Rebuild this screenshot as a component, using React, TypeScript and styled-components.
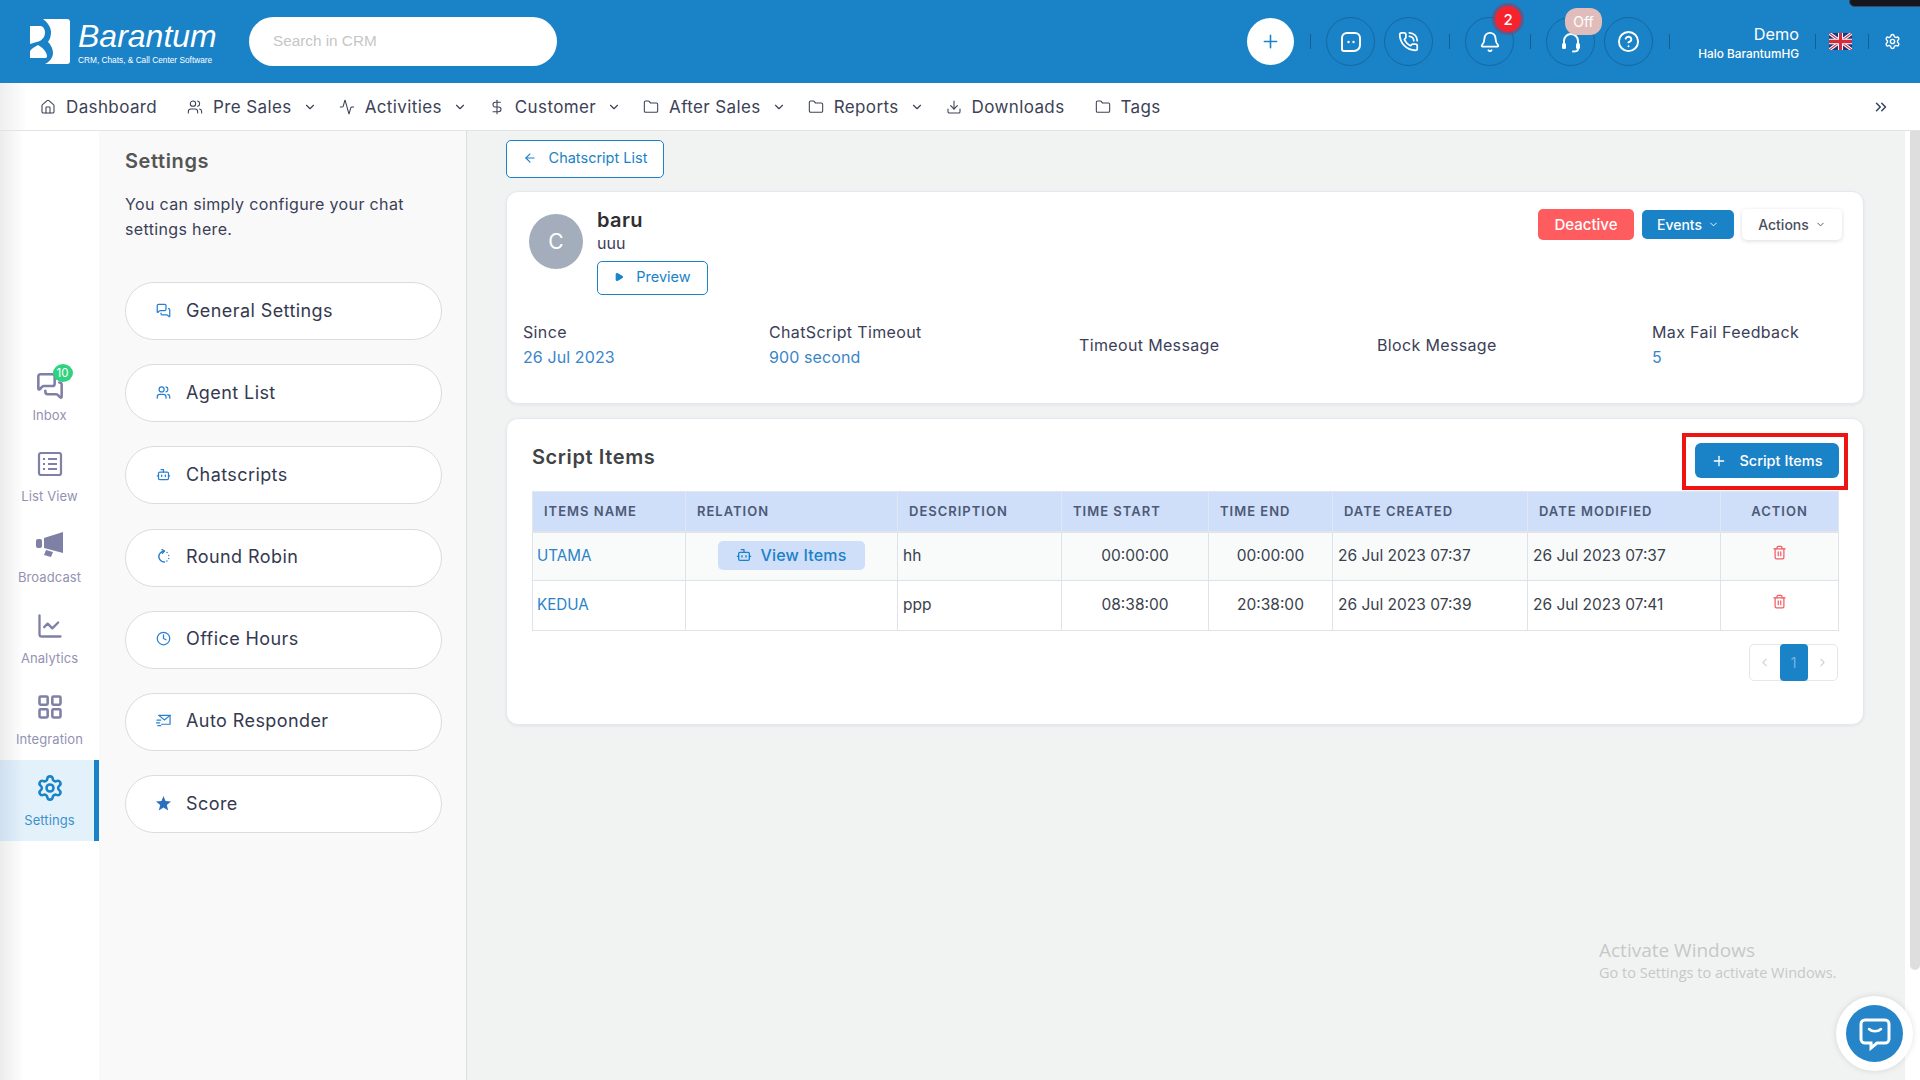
import React from "react";
import styled, { createGlobalStyle } from "styled-components";
import {
  House, Users, Activity, DollarSign, Folder, Download, ChevronDown, ChevronsRight, ChevronLeft, ChevronRight,
  Plus, PhoneCall, Bell, CircleHelp, Settings, MessagesSquare, ChartLine, LayoutGrid, Bot,
  Clock, ArrowLeft, Play, Trash2,
} from "lucide-react";

const BLUE = "#1a82c7";
const FONT = `Inter, "Noto Sans", "Liberation Sans", sans-serif`;

const Global = createGlobalStyle`
  html, body { margin: 0; padding: 0; background: #fff; }
  * { box-sizing: border-box; }
  body { font-family: ${FONT}; overflow: hidden; }
`;

const Shell = styled.div`
  position: relative; width: 1920px; height: 1080px; overflow: hidden;
  display: flex; flex-direction: column; background: #fff;
`;
const TopBar = styled.header`
  height: 83px; flex: none; display: flex; align-items: center; padding: 0 19px 0 30px; background: ${BLUE}; color: #fff;
`;
const Logo = styled.div`
  display: flex; align-items: center; gap: 8px; width: 185px;
  svg { flex: none; }
`;
const LogoText = styled.div`display: flex; flex-direction: column; font-family: "Liberation Sans", sans-serif;`;
const LogoName = styled.span`font-size: 32px; font-style: italic; line-height: 32px; margin-top: 1px;`;
const LogoSub = styled.span`font-size: 8.3px; line-height: 10px; margin-top: 3px; white-space: nowrap;`;
const Search = styled.input`
  width: 308px; height: 49px; margin-left: 34px; border: 0; border-radius: 25px; background: #fff; padding: 0 24px 2px; outline: none;
  font: 15.3px "Liberation Sans", sans-serif;
  &::placeholder { color: #c6c6c6; }
`;
const Spacer = styled.div`flex: 1;`;
const RoundAdd = styled.button`
  width: 47px; height: 47px; border: 0; border-radius: 50%; background: #fff; color: ${BLUE};
  display: flex; align-items: center; justify-content: center; padding: 0;
`;
const Sep = styled.span`width: 1px; height: 15px; background: #145f94; margin: 0 15px 0 16px; flex: none;`;
const RoundIcon = styled.div<{ $next?: boolean }>`
  position: relative; width: 49px; height: 49px; border-radius: 50%; border: 1px solid #16689f;
  display: flex; align-items: center; justify-content: center; color: #fff; flex: none;
  margin-left: ${(p) => (p.$next ? "9px" : "0")};
`;
const CountBadge = styled.span`
  position: absolute; left: 29px; top: -12px; width: 26px; height: 26px; border-radius: 50%; background: #f6222c;
  box-shadow: 0 0 0 3px rgba(150, 60, 90, .55); color: #fff; font-size: 15px; font-weight: 500;
  display: flex; align-items: center; justify-content: center;
`;
const OffBadge = styled.span`
  position: absolute; left: 18px; top: -10px; width: 37px; height: 27px; border-radius: 12px; background: #e0bdbb;
  color: #fff; font-size: 14px; display: flex; align-items: center; justify-content: center;
`;
const UserBox = styled.div`
  width: 115px; margin-left: -1px; padding-top: 3px; text-align: right; display: flex; flex-direction: column; align-items: flex-end; gap: 3px;
`;
const UserName = styled.span`font-size: 16.3px; line-height: 20px;`;
const UserHello = styled.span`font-size: 11.8px; line-height: 15px; font-weight: 500; white-space: nowrap;`;
const Flag = styled.svg`width: 23px; height: 17px; display: block; flex: none; margin-left: -2px;`;
const GearWrap = styled.div`display: flex; color: #fff;`;
const TopNotch = styled.div`
  position: absolute; top: -4px; right: -10px; width: 81px; height: 11px; background: #16171c; border-radius: 10px; border: 1px solid #3a4a60;
`;

const NavBar = styled.nav`
  height: 48px; flex: none; display: flex; align-items: center; padding: 0 30px 0 40px;
  border-bottom: 1px solid #e3e3e3;
  background: linear-gradient(to right, #efefef, #fff 28px);
  color: #3c4257; font-size: 17px; letter-spacing: .38px;
`;
const NavItem = styled.div<{ $more?: boolean }>`
  display: flex; align-items: center; margin-right: ${(p) => (p.$more ? 22 : 30)}px; white-space: nowrap;
  svg:first-child { margin-right: 10px; }
  svg:last-child:not(:first-child) { margin-left: 11px; }
`;
const NavEnd = styled.div`margin-left: auto; display: flex; color: #33425e;`;

const Body = styled.div`flex: 1; display: flex; min-height: 0;`;
const Rail = styled.aside`
  width: 99px; flex: none; padding-top: 224px;
  background: linear-gradient(to right, #ececec, #fff 24px);
`;
const RailItem = styled.div<{ $active?: boolean }>`
  height: 81px; display: flex; flex-direction: column; align-items: center; padding-top: 14px;
  color: ${(p) => (p.$active ? BLUE : "#7f80a6")};
  background: ${(p) => (p.$active ? "linear-gradient(to right, #cfdfee, #e3f1fb 24px)" : "transparent")};
  box-shadow: ${(p) => (p.$active ? `inset -5px 0 0 ${BLUE}` : "none")};
`;
const RailIcon = styled.div<{ $drop?: number }>`
  height: 28px; margin-top: ${(p) => p.$drop ?? 0}px; margin-bottom: ${(p) => -(p.$drop ?? 0)}px;
  display: flex; align-items: center; justify-content: center; position: relative;
`;
const RailLabel = styled.span`margin-top: 10px; font-size: 13px; letter-spacing: .1px; line-height: 16px; opacity: .85;`;
const InboxBadge = styled.span`
  position: absolute; left: 17px; top: -8px; width: 20px; height: 18px; border-radius: 50%; background: #2fd37f; color: #fff;
  font-size: 11.5px; letter-spacing: 0; display: flex; align-items: center; justify-content: center;
`;
const Panel = styled.section`
  width: 368px; flex: none; padding: 15px 24px 0 26px; background: #f9f9f9; border-right: 1px solid #ddd;
`;
const PanelTitle = styled.h2`margin: 0; font-size: 20px; line-height: 30px; font-weight: 600; color: #555; letter-spacing: .6px;`;
const PanelDesc = styled.p`margin: 16px 0 40px; width: 300px; font-size: 16px; letter-spacing: .35px; line-height: 25px; color: #3b4058;`;
const PillList = styled.div`display: flex; flex-direction: column; gap: 24.2px;`;
const Pill = styled.div`
  width: 317px; height: 58px; border: 1px solid #dcdcdc; border-radius: 29px; background: #fff; padding-bottom: 2px;
  display: flex; align-items: center; padding-left: 30px; gap: 15px; color: #34394f; font-size: 18px; letter-spacing: .42px;
  svg { color: #2a7fd0; flex: none; }
`;
const Main = styled.main`flex: 1; padding: 9px 41px 0 39px; background: #f1f3f3; min-width: 0;`;
const Gutter = styled.div`width: 15px; flex: none; background: #fff; padding-left: 5px;`;
const Thumb = styled.div`width: 10px; height: 839px; background: #dedede; border-radius: 0 0 5px 5px;`;
const OutlineBtn = styled.button<{ $w: number; $h: number }>`
  width: ${(p) => p.$w}px; height: ${(p) => p.$h}px; border: 1px solid ${BLUE}; border-radius: 5px; background: #fff; color: ${BLUE};
  font: 14.5px ${FONT}; display: flex; align-items: center; justify-content: center; gap: 12px; padding: 0 0 3px;
`;
const Card = styled.div<{ $h: number; $mt: number }>`
  height: ${(p) => p.$h}px; margin-top: ${(p) => p.$mt}px; background: #fff; border: 1px solid #e3e9ef; border-radius: 12px;
  box-shadow: 0 1px 3px rgba(120, 140, 170, .15);
`;
const HeadRow = styled.div`display: flex; justify-content: space-between; padding: 15px 21px 0 22px;`;
const Identity = styled.div`display: flex; gap: 14px;`;
const Avatar = styled.div`
  width: 54px; height: 55px; margin-top: 7px; border-radius: 50%; background: #a3adbb; color: #fff; font-size: 21px;
  display: flex; align-items: center; justify-content: center;
`;
const Info = styled.div`display: flex; flex-direction: column; align-items: flex-start;`;
const Name = styled.div`font-size: 20px; line-height: 26px; font-weight: 600; color: #2e2e33; letter-spacing: .4px;`;
const Sub = styled.div`font-size: 16px; line-height: 20px; color: #3b4058; margin-bottom: 8px;`;
const BtnRow = styled.div`display: flex; gap: 8px; align-items: center; margin-top: 2px; height: 31px;`;
const ActionBtn = styled.button<{ $w: number; $h: number; $bg: string; $fg: string; $size: number }>`
  width: ${(p) => p.$w}px; height: ${(p) => p.$h}px; background: ${(p) => p.$bg}; color: ${(p) => p.$fg}; border: 0; border-radius: 5px;
  font: 500 ${(p) => p.$size}px ${FONT}; display: flex; align-items: center; justify-content: center; gap: 6px; padding: 0;
  box-shadow: ${(p) => (p.$bg === "#fff" ? "0 1px 4px rgba(0,0,0,.14)" : "none")};
`;
const Stats = styled.div`
  display: grid; grid-template-columns: 246px 310px 298px 275px auto; align-items: center; margin: 25px 0 0 16px;
`;
const StatLabel = styled.div`font-size: 16px; letter-spacing: .35px; line-height: 25px; color: #3b4058;`;
const StatValue = styled.div`font-size: 16px; letter-spacing: .1px; line-height: 25px; color: #3a85c9;`;
const ItemsCard = styled.div`padding: 24px 24px 0 25px;`;
const ItemsHead = styled.div`display: flex; justify-content: space-between; align-items: center; height: 35px;`;
const ItemsTitle = styled.h3`margin: 0 0 7px 0; font-size: 20px; font-weight: 600; color: #3f4346; letter-spacing: .6px;`;
const AddWrap = styled.div`position: relative;`;
const AddBtn = styled.button`
  width: 144px; height: 35px; border: 0; border-radius: 6px; background: ${BLUE}; color: #fff; font: 500 14.5px ${FONT};
  display: flex; align-items: center; justify-content: center; gap: 12px; padding: 0;
`;
const RedBox = styled.div`position: absolute; left: -13px; right: -9px; top: -10px; bottom: -12px; border: 4px solid #ee1414; pointer-events: none;`;
const Table = styled.table`
  width: 1306px; margin-top: 13px; border-collapse: collapse; table-layout: fixed;
`;
const Th = styled.th<{ $w: number; $center?: boolean }>`
  width: ${(p) => p.$w}px; height: 40px; padding: 0 0 0 ${(p) => (p.$center ? 0 : 11)}px; background: #cfdef9; border: 1px solid #e2e6f0; border-bottom: 2px solid #e2e4ea;
  font-size: 13px; font-weight: 600; letter-spacing: 1px; color: #4c5a76; text-align: ${(p) => (p.$center ? "center" : "left")};
`;
const Tr = styled.tr<{ $shade?: boolean; $h: number }>`
  height: ${(p) => p.$h}px; background: ${(p) => (p.$shade ? "#f9fbfb" : "#fff")};
`;
const Td = styled.td<{ $center?: boolean; $link?: boolean }>`
  padding: 0 0 2px ${(p) => (p.$center ? 0 : 5)}px; border: 1px solid #e0e2ea; font-size: 15.5px;
  color: ${(p) => (p.$link ? "#2b82c9" : "#3a3f4c")}; text-align: ${(p) => (p.$center ? "center" : "left")};
  white-space: nowrap;
`;
const LinkName = styled.span`margin-left: -1px; font-size: 15.2px;`;
const ViewItems = styled.button`
  width: 147px; height: 29px; margin: 1px 0 0 27px; border: 0; border-radius: 5px; background: #cfdef9; color: ${BLUE};
  font: 500 16px ${FONT}; letter-spacing: .2px; display: flex; align-items: center; justify-content: center; gap: 8px; padding: 0 0 1px;
`;
const TrashBtn = styled.span`display: inline-flex; color: #f25c66; position: relative; top: -1px;`;
const Pager = styled.div`
  display: flex; width: 89px; height: 37px; margin: 13px 1px 0 auto; border: 1px solid #e4e8ee; border-radius: 5px; color: #d0d5dc;
`;
const PageStep = styled.div`flex: 1; display: flex; align-items: center; justify-content: center;`;
const PageCurrent = styled.div`
  width: 28px; background: ${BLUE}; border-radius: 4px; color: #74b4e2; font-size: 14px;
  display: flex; align-items: center; justify-content: center; margin: -1px 0;
`;
const Watermark = styled.div`
  position: absolute; left: 1599px; top: 938px; color: #c6c8c8; font-family: "Open Sans", sans-serif; pointer-events: none;
`;
const WmTitle = styled.div`font-size: 19px; line-height: 25px;`;
const WmSub = styled.div`font-size: 14.5px; line-height: 20px;`;
const ChatFab = styled.div`
  position: absolute; left: 1836px; top: 996px; width: 77px; height: 75px; border-radius: 50%; background: #fff;
  box-shadow: 0 0 6px rgba(0,0,0,.12); display: flex; align-items: center; justify-content: center;
`;
const ChatInner = styled.div`
  width: 57px; height: 57px; border-radius: 50%; background: #2585c8; display: flex; align-items: center; justify-content: center;
`;

const LogoMark = () => (
  <svg width="40" height="45" viewBox="0 0 40 45" fill="#fff">
    <path d="M13 0H37a3 3 0 0 1 3 3V42a3 3 0 0 1-3 3H15c4-2 8-6 8-11 0-5-3-9-5-11 2-3 3-6 3-10 0-5-4-10-8-13Z" />
    <path d="M0 7H11c3 1 4 4 4 7s-2 6-5 8L0 25Z" />
    <path d="M0 39V33c0-3 5-5 8-7 4 2 9 7 9 11 0 2-1 2-3 2Z" />
  </svg>
);
const BotSquare = () => (
  <svg width="22" height="22" viewBox="0 0 22 22" fill="none" stroke="#fff" strokeWidth="2">
    <path d="M7 2h8a5 5 0 0 1 5 5v7a6 6 0 0 1-6 6H4a2 2 0 0 1-2-2V7a5 5 0 0 1 5-5Z" />
    <circle cx="8.5" cy="11" r="1.2" fill="#fff" stroke="none" />
    <circle cx="13.5" cy="11" r="1.2" fill="#fff" stroke="none" />
  </svg>
);
const AgentHeadset = () => (
  <svg width="24" height="24" viewBox="0 0 24 24" fill="none" stroke="#fff" strokeWidth="2" strokeLinecap="round">
    <path d="M5 15v-4a7 7 0 0 1 14 0v4" />
    <rect x="3" y="13" width="4" height="6" rx="1.5" fill="#fff" stroke="none" />
    <rect x="17" y="13" width="4" height="6" rx="1.5" fill="#fff" stroke="none" />
    <path d="M19 19c0 2-2 2.5-5 2.5" />
  </svg>
);
const ListSquare = () => (
  <svg width="26" height="26" viewBox="0 0 26 26" fill="none" stroke="currentColor" strokeWidth="2.2">
    <rect x="2" y="2" width="22" height="22" rx="2" />
    <path d="M6 8h2M11 8h9M6 13h2M11 13h9M6 18h2M11 18h9" />
  </svg>
);
const Horn = () => (
  <svg width="28" height="26" viewBox="0 0 28 26" fill="currentColor">
    <rect x="0" y="7" width="6" height="9" rx="2" />
    <path d="M8 6 27 0v21L8 16Z" />
    <path d="M10 18l7 2-2 5-7-2Z" />
  </svg>
);
const StarIcon = () => (
  <svg width="15" height="15" viewBox="0 0 15 15" fill="#2a6fc0">
    <path d="M7.5 0l2 5 5.5.4-4.2 3.5 1.4 5.6-4.7-3-4.7 3 1.4-5.6L0 5.4 5.5 5Z" />
  </svg>
);
const RobinIcon = () => (
  <svg width="15" height="15" viewBox="0 0 15 15" fill="none" stroke="currentColor" strokeWidth="1.4" strokeLinecap="round">
    <path d="M8 2.2A5.4 5.4 0 1 0 8.5 13" />
    <path d="M6 .4 8.4 2.2 6.4 4.2" />
    <path d="M11 3.4l.1.1M12.8 6.4v.1M12.8 9.4v.1M11 12l-.1.1" />
  </svg>
);
const ResponderIcon = () => (
  <svg width="15" height="15" viewBox="0 0 16 15" fill="none" stroke="currentColor" strokeWidth="1.3" strokeLinecap="round">
    <path d="M3 2h12v9.5H6" />
    <path d="M3 2l6 5 6-5" />
    <path d="M1 7h4M0.5 10h3.5M2 13h3" />
  </svg>
);
const UkFlag = () => (
  <Flag viewBox="0 0 60 40" preserveAspectRatio="none">
    <rect width="60" height="40" fill="#26357a" />
    <path d="M0 0l60 40M60 0L0 40" stroke="#fff" strokeWidth="8" />
    <path d="M0 0l60 40M60 0L0 40" stroke="#d23a4a" strokeWidth="3" />
    <path d="M30 0v40M0 20h60" stroke="#fff" strokeWidth="13" />
    <path d="M30 0v40M0 20h60" stroke="#d32a3c" strokeWidth="8" />
  </Flag>
);
const ChatGlyph = () => (
  <svg width="34" height="34" viewBox="0 0 34 34" fill="none" stroke="#fff">
    <path d="M7 3h20a4 4 0 0 1 4 4v15a4 4 0 0 1-4 4h-8l-6 5v-5H7a4 4 0 0 1-4-4V7a4 4 0 0 1 4-4Z" strokeWidth="3" />
    <path d="M11 12c3 3 9 3 12 0" strokeWidth="2.5" strokeLinecap="round" />
  </svg>
);

const navItems = [
  { icon: House, label: "Dashboard" },
  { icon: Users, label: "Pre Sales", more: true },
  { icon: Activity, label: "Activities", more: true },
  { icon: DollarSign, label: "Customer", more: true },
  { icon: Folder, label: "After Sales", more: true },
  { icon: Folder, label: "Reports", more: true },
  { icon: Download, label: "Downloads" },
  { icon: Folder, label: "Tags" },
];
const pills = [
  { icon: <MessagesSquare size={15} />, label: "General Settings" },
  { icon: <Users size={15} />, label: "Agent List" },
  { icon: <Bot size={15} />, label: "Chatscripts" },
  { icon: <RobinIcon />, label: "Round Robin" },
  { icon: <Clock size={15} />, label: "Office Hours" },
  { icon: <ResponderIcon />, label: "Auto Responder" },
  { icon: <StarIcon />, label: "Score" },
];
const stats = [
  { label: "Since", value: "26 Jul 2023" },
  { label: "ChatScript Timeout", value: "900 second" },
  { label: "Timeout Message" },
  { label: "Block Message" },
  { label: "Max Fail Feedback", value: "5" },
];
const rows = [
  { name: "UTAMA", rel: true, desc: "hh", start: "00:00:00", end: "00:00:00", created: "26 Jul 2023 07:37", modified: "26 Jul 2023 07:37", h: 49, shade: true },
  { name: "KEDUA", rel: false, desc: "ppp", start: "08:38:00", end: "20:38:00", created: "26 Jul 2023 07:39", modified: "26 Jul 2023 07:41", h: 50, shade: false },
];

export default function App() {
  return (
    <Shell>
      <Global />
      <TopBar>
        <Logo>
          <LogoMark />
          <LogoText>
            <LogoName>Barantum</LogoName>
            <LogoSub>CRM, Chats, &amp; Call Center Software</LogoSub>
          </LogoText>
        </Logo>
        <Search placeholder="Search in CRM" />
        <Spacer />
        <RoundAdd><Plus size={21} strokeWidth={1.8} /></RoundAdd>
        <Sep />
        <RoundIcon><BotSquare /></RoundIcon>
        <RoundIcon $next><PhoneCall size={21} /></RoundIcon>
        <Sep />
        <RoundIcon><Bell size={22} /><CountBadge>2</CountBadge></RoundIcon>
        <Sep />
        <RoundIcon><AgentHeadset /><OffBadge>Off</OffBadge></RoundIcon>
        <RoundIcon $next><CircleHelp size={23} /></RoundIcon>
        <Sep />
        <UserBox>
          <UserName>Demo</UserName>
          <UserHello>Halo BarantumHG</UserHello>
        </UserBox>
        <Sep />
        <UkFlag />
        <Sep />
        <GearWrap><Settings size={17} /></GearWrap>
      </TopBar>
      <TopNotch />
      <NavBar>
        {navItems.map((n) => (
          <NavItem key={n.label} $more={n.more}>
            <n.icon size={16} strokeWidth={1.6} />
            {n.label}
            {n.more && <ChevronDown size={14} />}
          </NavItem>
        ))}
        <NavEnd><ChevronsRight size={18} /></NavEnd>
      </NavBar>
      <Body>
        <Rail>
          <RailItem>
            <RailIcon $drop={3}><MessagesSquare size={28} strokeWidth={2.2} /><InboxBadge>10</InboxBadge></RailIcon>
            <RailLabel>Inbox</RailLabel>
          </RailItem>
          <RailItem><RailIcon><ListSquare /></RailIcon><RailLabel>List View</RailLabel></RailItem>
          <RailItem><RailIcon><Horn /></RailIcon><RailLabel>Broadcast</RailLabel></RailItem>
          <RailItem><RailIcon><ChartLine size={28} strokeWidth={2} /></RailIcon><RailLabel>Analytics</RailLabel></RailItem>
          <RailItem><RailIcon><LayoutGrid size={28} strokeWidth={2.2} /></RailIcon><RailLabel>Integration</RailLabel></RailItem>
          <RailItem $active><RailIcon><Settings size={28} strokeWidth={2.2} /></RailIcon><RailLabel>Settings</RailLabel></RailItem>
        </Rail>
        <Panel>
          <PanelTitle>Settings</PanelTitle>
          <PanelDesc>You can simply configure your chat settings here.</PanelDesc>
          <PillList>
            {pills.map((p) => (<Pill key={p.label}>{p.icon}{p.label}</Pill>))}
          </PillList>
        </Panel>
        <Main>
          <OutlineBtn $w={158} $h={38}><ArrowLeft size={14} />Chatscript List</OutlineBtn>
          <Card $h={213} $mt={13}>
            <HeadRow>
              <Identity>
                <Avatar>C</Avatar>
                <Info>
                  <Name>baru</Name>
                  <Sub>uuu</Sub>
                  <OutlineBtn $w={111} $h={34}><Play size={10} fill={BLUE} />Preview</OutlineBtn>
                </Info>
              </Identity>
              <BtnRow>
                <ActionBtn $w={96} $h={31} $bg="#ff5c5f" $fg="#fff" $size={15}>Deactive</ActionBtn>
                <ActionBtn $w={92} $h={29} $bg={BLUE} $fg="#fff" $size={14}>Events<ChevronDown size={11} /></ActionBtn>
                <ActionBtn $w={100} $h={31} $bg="#fff" $fg="#4a4f5c" $size={14}>Actions<ChevronDown size={11} /></ActionBtn>
              </BtnRow>
            </HeadRow>
            <Stats>
              {stats.map((s) => (
                <div key={s.label}>
                  <StatLabel>{s.label}</StatLabel>
                  {s.value && <StatValue>{s.value}</StatValue>}
                </div>
              ))}
            </Stats>
          </Card>
          <Card $h={307} $mt={14}>
            <ItemsCard>
              <ItemsHead>
                <ItemsTitle>Script Items</ItemsTitle>
                <AddWrap>
                  <AddBtn><Plus size={16} />Script Items</AddBtn>
                  <RedBox />
                </AddWrap>
              </ItemsHead>
              <Table>
                <thead>
                  <tr>
                    <Th $w={153}>ITEMS NAME</Th>
                    <Th $w={212}>RELATION</Th>
                    <Th $w={164}>DESCRIPTION</Th>
                    <Th $w={147}>TIME START</Th>
                    <Th $w={124}>TIME END</Th>
                    <Th $w={195}>DATE CREATED</Th>
                    <Th $w={193}>DATE MODIFIED</Th>
                    <Th $w={118} $center>ACTION</Th>
                  </tr>
                </thead>
                <tbody>
                  {rows.map((r) => (
                    <Tr key={r.name} $h={r.h} $shade={r.shade}>
                      <Td $link><LinkName>{r.name}</LinkName></Td>
                      <Td>{r.rel && <ViewItems><Bot size={16} />View Items</ViewItems>}</Td>
                      <Td>{r.desc}</Td>
                      <Td $center>{r.start}</Td>
                      <Td $center>{r.end}</Td>
                      <Td>{r.created}</Td>
                      <Td>{r.modified}</Td>
                      <Td $center><TrashBtn><Trash2 size={15} /></TrashBtn></Td>
                    </Tr>
                  ))}
                </tbody>
              </Table>
              <Pager>
                <PageStep><ChevronLeft size={13} /></PageStep>
                <PageCurrent>1</PageCurrent>
                <PageStep><ChevronRight size={13} /></PageStep>
              </Pager>
            </ItemsCard>
          </Card>
        </Main>
        <Gutter><Thumb /></Gutter>
      </Body>
      <Watermark>
        <WmTitle>Activate Windows</WmTitle>
        <WmSub>Go to Settings to activate Windows.</WmSub>
      </Watermark>
      <ChatFab><ChatInner><ChatGlyph /></ChatInner></ChatFab>
    </Shell>
  );
}
